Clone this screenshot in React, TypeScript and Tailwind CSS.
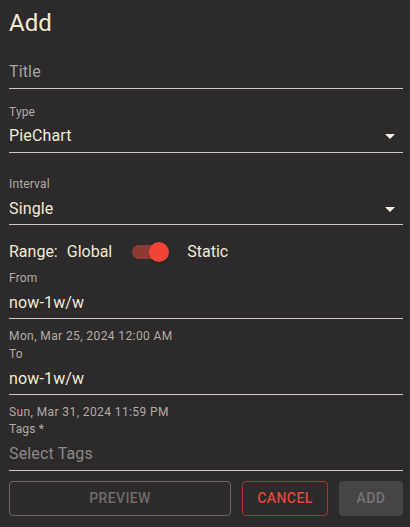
import { useState } from "react";

const font = { fontFamily: "Roboto, 'Liberation Sans', sans-serif" };

function Caret() {
  return (
    <svg width="10" height="5" viewBox="0 0 10 5" className="mr-[8px] shrink-0">
      <path d="M0 0h10L5 5z" fill="#f4efe4" />
    </svg>
  );
}

function SelectField({ label, value, top, inner }: { label: string; value: string; top: string; inner: string }) {
  return (
    <div className={top}>
      <div className="h-[16px] text-[12px] leading-[16px] tracking-[0.15px] text-[#b1aca4]">{label}</div>
      <div className={`${inner} flex items-center justify-between border-b border-[#cdc9c2] text-[16px] leading-[20px] tracking-[0.15px] text-[#f2ead3]`}>
        <span>{value}</span>
        <Caret />
      </div>
    </div>
  );
}

export default function App() {
  const [isStatic, setStatic] = useState(true);

  return (
    <div className="min-h-[527px] w-[410px] bg-[#2c2a2b] pl-[9px] pr-[7px]" style={font}>
      <div className="flex h-[46px] items-center text-[24px] text-[#f2ead3]">Add</div>

      <div className="flex h-[43px] items-end border-b border-[#cdc9c2] pb-[6px] text-[16px] leading-[20px] tracking-[0.15px] text-[#a9a49d]">
        Title
      </div>

      <SelectField label="Type" value="PieChart" top="mt-[15px]" inner="mt-[6px] pb-[6px]" />
      <SelectField label="Interval" value="Single" top="mt-[23px]" inner="mt-[7px] pb-[5px]" />

      <div className="mt-[11px] flex h-[32px] items-center text-[16px] text-[#f2ead3]">
        <span>Range:</span>
        <span className="ml-[9px]">Global</span>
        <button
          type="button"
          onClick={() => setStatic(!isStatic)}
          className="relative ml-[20px] h-[20px] w-[37px]"
        >
          <span className="absolute left-0 top-[3px] h-[14px] w-[34px] rounded-full bg-[#8d3a35]" />
          <span
            className={`absolute top-0 h-[20px] w-[20px] rounded-full bg-[#ef4437] shadow ${isStatic ? "left-[17px]" : "left-0"}`}
          />
        </button>
        <span className="ml-[18px]">Static</span>
      </div>

      <div className="mt-[2px] h-[16px] text-[12px] leading-[16px] tracking-[0.15px] text-[#b1aca4]">From</div>
      <div className="mt-[7px] border-b border-[#cdc9c2] pb-[5px] text-[16px] leading-[20px] tracking-[0.15px] text-[#f2ead3]">now-1w/w</div>
      <div className="mt-[9px] h-[16px] text-[12px] leading-[16px] tracking-[0.4px] text-[#b1aca4]">Mon, Mar 25, 2024 12:00 AM</div>

      <div className="mt-[2px] h-[16px] text-[12px] leading-[16px] tracking-[0.15px] text-[#b1aca4]">To</div>
      <div className="mt-[7px] border-b border-[#cdc9c2] pb-[5px] text-[16px] leading-[20px] tracking-[0.15px] text-[#f2ead3]">now-1w/w</div>
      <div className="mt-[9px] h-[16px] text-[12px] leading-[16px] tracking-[0.4px] text-[#b1aca4]">Sun, Mar 31, 2024 11:59 PM</div>

      <div className="mt-[1px] h-[16px] text-[12px] leading-[16px] tracking-[0.15px] text-[#b1aca4]">Tags *</div>
      <div className="mt-[7px] border-b border-[#cdc9c2] pb-[6px] text-[16px] leading-[20px] tracking-[0.15px] text-[#8d8984]">Select Tags</div>

      <div className="mt-[10px] flex h-[35px] gap-[11px] text-[14px] font-medium tracking-[0.4px]">
        <button type="button" className="flex-1 rounded-[4px] border border-[#6a6765] text-[#6e6b68]">
          PREVIEW
        </button>
        <button type="button" className="w-[86px] rounded-[4px] border border-[#9f3a33] text-[#e2453a]">
          CANCEL
        </button>
        <button type="button" className="w-[64px] rounded-[4px] bg-[#464445] text-[#767473]">
          ADD
        </button>
      </div>
    </div>
  );
}
